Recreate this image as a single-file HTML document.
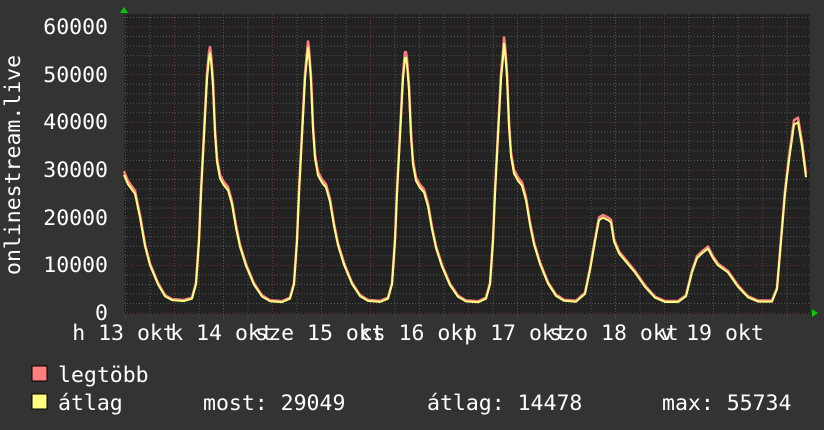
<!DOCTYPE html>
<html><head><meta charset="utf-8"><style>
html,body{margin:0;padding:0;background:#333;}
svg{display:block}
text{font-family:"DejaVu Sans Mono","Liberation Mono",monospace;fill:#fff;font-size:21.5px}
</style></head><body>
<svg id="s" width="824" height="430" xmlns="http://www.w3.org/2000/svg">
<rect width="824" height="430" fill="#333"/>
<rect x="124" y="14" width="686" height="300" fill="#222"/>
<g id="grid"></g>
<path id="mx" fill="none" stroke="#ff7f7f" stroke-width="2.5" stroke-linejoin="round"/>
<path id="av" fill="none" stroke="#ffff80" stroke-width="2" stroke-linejoin="round"/>
<polygon points="120,13 128,13 124,7" fill="#0c0"/>
<polygon points="812,309 812,317 818,313" fill="#0c0"/>
<g text-anchor="end">
<text x="108" y="34">60000</text><text x="108" y="82">50000</text><text x="108" y="129">40000</text>
<text x="108" y="177">30000</text><text x="108" y="225">20000</text><text x="108" y="272">10000</text>
<text x="108" y="320">0</text></g>
<text transform="translate(20,275) rotate(-90)">onlinestream.live</text>
<g text-anchor="middle">
<text x="124" y="340">h 13 okt</text><text x="222" y="340">k 14 okt</text><text x="320" y="340">sze 15 okt</text>
<text x="418" y="340">cs 16 okt</text><text x="516" y="340">p 17 okt</text><text x="614" y="340">szo 18 okt</text>
<text x="712" y="340">v 19 okt</text></g>
<rect x="32" y="366" width="15" height="15" fill="#ff7f7f" stroke="#000"/>
<rect x="32" y="394" width="15" height="15" fill="#ffff80" stroke="#000"/>
<text x="58" y="382">legtöbb</text>
<text x="58" y="410">átlag</text>
<text x="203" y="410">most: 29049</text>
<text x="427" y="410">átlag: 14478</text>
<text x="662" y="410">max: 55734</text>
</svg>
<script>
var g=document.getElementById('grid'),h='';
for(var v=0;v<=62000;v+=2000){var y=313-v*286/60000;h+='<line x1="124" x2="810" y1="'+y+'" y2="'+y+'" stroke="'+(v%10000==0?'#6a3a3a':'#555')+'" stroke-dasharray="1,2"/>';}
for(var x=125.5;x<810;x+=24.5){var m=Math.abs(((x-174)/98)-Math.round((x-174)/98))<0.05;h+='<line y1="14" y2="318" x1="'+x+'" x2="'+x+'" stroke="'+(m?'#6a3a3a':'#555')+'" stroke-dasharray="1,2"/>';}
g.innerHTML=h;
var pts=[[124,29000],[128,27000],[135,25000],[140,20000],[145,14000],[150,10000],[158,6000],[165,3500],[172,2700],[184,2500]];
var day=[[-18,3000],[-14,6000],[-11,15000],[-9,25000],[-6,37000],[-3,49000],[-1,53500],[0,0],[1,53500],[3,48000],[5,38000],[7,32000],[10,28500],[14,27000],[18,26000],[22,23000],[26,18000],[30,14000],[36,10000],[44,6000],[52,3500],[60,2500],[72,2300]];
[[210,54500],[308,55700],[406,53500],[504,56500]].forEach(function(p){day.forEach(function(d){var v=d[1]==0?p[1]:d[1]*(d[0]<0?1:p[1]/55000);pts.push([p[0]+d[0],v]);});});
pts=pts.concat([[585,4000],[590,9000],[595,15000],[599,19500],[603,20000],[608,19500],[611,19000],[614,15000],[619,12500],[625,11000],[635,8500],[645,5500],[655,3200],[665,2300],[678,2300],[686,3500],[692,8500],[697,11500],[702,12500],[708,13500],[713,11500],[718,10000],[728,8500],[738,5500],[748,3300],[758,2400],[772,2400],[777,5000],[781,15000],[785,25000],[789,32000],[794,39500],[798,40000],[802,35000],[806,28500]]);
function P(o,k){return 'M'+pts.map(function(p){return p[0]+','+(313-p[1]*k*286/60000-o).toFixed(1)}).join(' L');}
document.getElementById('mx').setAttribute('d',P(0.8,1.02));
document.getElementById('av').setAttribute('d',P(0,1));
</script>
</body></html>
